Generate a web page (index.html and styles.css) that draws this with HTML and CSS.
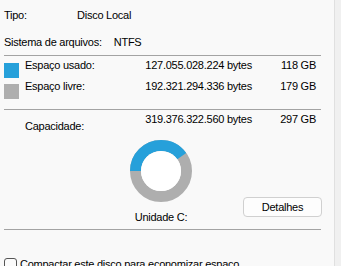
FILE: index.html
```
<!DOCTYPE html>
<html lang="pt-BR">
<head>
<meta charset="utf-8">
<link rel="stylesheet" href="styles.css">
</head>
<body>
<div class="panel">
  <div class="row first"><span class="lbl-fixed">Tipo:</span><span>Disco Local</span></div>
  <div class="row second"><span class="lbl-auto">Sistema de arquivos:</span><span>NTFS</span></div>
  <div class="sep sep1"></div>
  <div class="usage">
    <span class="swatch used"></span><span class="lbl">Espaço usado:</span><span class="num">127.055.028.224 bytes</span><span class="gb">118 GB</span>
    <span class="swatch free"></span><span class="lbl">Espaço livre:</span><span class="num">192.321.294.336 bytes</span><span class="gb">179 GB</span>
  </div>
  <div class="sep sep2"></div>
  <div class="usage cap">
    <span></span><span class="lbl cap-lbl">Capacidade:</span><span class="num">319.376.322.560 bytes</span><span class="gb">297 GB</span>
  </div>
  <div class="drive">
    <div class="chartcol">
      <svg width="62" height="62" viewBox="0 0 62 62">
        <circle cx="31" cy="31" r="25.5" fill="none" stroke="#aeaeae" stroke-width="11"/>
        <circle cx="31" cy="31" r="25.5" fill="none" stroke="#26a0da" stroke-width="11" stroke-dasharray="63.8 200" transform="rotate(180 31 31)"/>
        <circle cx="31" cy="31" r="20" fill="#ffffff"/>
      </svg>
      <div class="unit">Unidade C:</div>
    </div>
    <button class="btn">Detalhes</button>
  </div>
  <div class="sep sep3"></div>
  <label class="check"><span class="box"></span><span>Compactar este disco para economizar espaço</span></label>
</div>
</body>
</html>
```
FILE: styles.css
```
html, body {
  margin: 0;
  padding: 0;
  background: #f0f0f0;
}
body {
  font-family: "Liberation Sans", Arial, sans-serif;
  font-size: 11px;
  letter-spacing: -0.25px;
  color: #000;
  line-height: 15px;
}
.panel {
  width: 335px;
  height: 266px;
  overflow: hidden;
  box-sizing: border-box;
  background: #f9f9f9;
  border-right: 1px solid #e0e0e0;
  padding: 8px 0 0 4px;
}
.row {
  display: flex;
}
.second {
  margin-top: 12px;
}
.lbl-fixed {
  width: 73px;
}
.lbl-auto {
  margin-right: 12px;
}
.sep {
  width: 317px;
  height: 1px;
  background: #a3a3a3;
}
.sep1 { margin-top: 5px; }
.usage {
  display: grid;
  grid-template-columns: 21px 119px 108px 64px;
  grid-auto-rows: 21px;
  margin-top: 2px;
}
.usage .num, .usage .gb {
  text-align: right;
}
.swatch {
  width: 15px;
  height: 15px;
  margin-top: 5px;
}
.used { background: #26a0da; }
.free { background: #aeaeae; }
.sep2 { margin-top: 9px; }
.cap {
  grid-auto-rows: 22px;
}
.cap-lbl {
  padding-top: 7px;
}
.drive {
  display: flex;
  margin-top: 6px;
}
.chartcol {
  margin-left: 126px;
  width: 62px;
  display: flex;
  flex-direction: column;
  align-items: center;
}
.chartcol svg {
  display: block;
}
.unit {
  margin-top: 8px;
  white-space: nowrap;
}
.btn {
  margin: 57px 0 0 51px;
  width: 79px;
  height: 20px;
  padding: 0;
  box-sizing: border-box;
  border: 1px solid #d0d0d0;
  border-radius: 4px;
  background: #fdfdfd;
  font: inherit;
  letter-spacing: inherit;
  color: #000;
}
.sep3 { margin-top: 4px; }
.check {
  display: flex;
  align-items: flex-start;
  margin-top: 27px;
}
.box {
  width: 13px;
  height: 13px;
  box-sizing: border-box;
  border: 1px solid #555;
  border-radius: 3px;
  background: #fbfbfb;
  margin: 1px 3px 0 0;
}
```
